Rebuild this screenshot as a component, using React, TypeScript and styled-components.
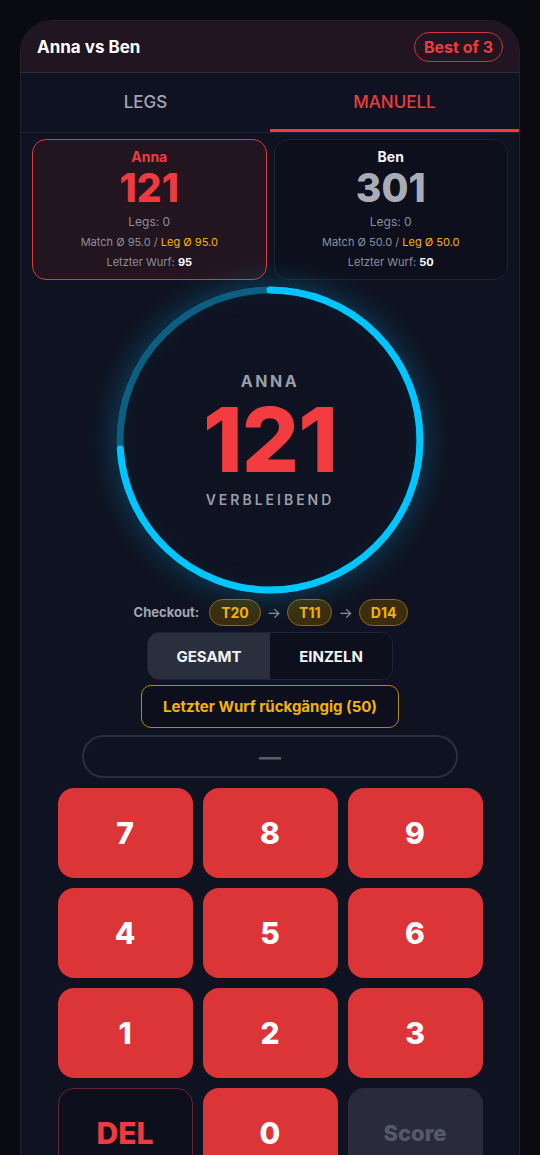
import React, { useState } from 'react';
import styled, { createGlobalStyle } from 'styled-components';

const GlobalStyle = createGlobalStyle`
  html, body {
    margin: 0;
    padding: 0;
    background: #0a0b10;
    font-family: Inter, "Noto Sans", sans-serif;
  }
  * { box-sizing: border-box; }
`;

const Page = styled.div`
  padding-top: 20px;
  min-height: 1155px;
`;

const Phone = styled.div`
  width: 500px;
  margin: 0 auto;
  background: #0f1220;
  border: 1px solid #1d2130;
  border-bottom: none;
  border-radius: 32px 32px 0 0;
  overflow: hidden;
  height: 1135px;
`;

const Header = styled.div`
  height: 52px;
  display: flex;
  align-items: center;
  justify-content: space-between;
  padding: 0 16px;
  background: #201520;
  border-bottom: 1px solid #2a2b38;
`;

const Title = styled.div`
  color: #fff;
  font-weight: 700;
  font-size: 17px;
`;

const Badge = styled.div`
  color: #ef3b40;
  border: 1.5px solid #c8353b;
  border-radius: 999px;
  padding: 4px 9px;
  font-weight: 700;
  font-size: 16px;
`;

const Tabs = styled.div`
  display: flex;
  height: 60px;
  border-bottom: 1px solid #1f2230;
`;

const Tab = styled.div<{ $active?: boolean }>`
  flex: 1;
  display: flex;
  align-items: center;
  justify-content: center;
  font-size: 17px;
  font-weight: 500;
  color: ${(p) => (p.$active ? '#ef3b40' : '#a3a7b3')};
  border-bottom: 3px solid ${(p) => (p.$active ? '#ef3b40' : 'transparent')};
  padding-top: 2px;
`;

const Cards = styled.div`
  display: grid;
  grid-template-columns: 1fr 1fr;
  gap: 7px;
  padding: 6px 11px 0 11px;
`;

const Card = styled.div<{ $active?: boolean }>`
  height: 141px;
  border-radius: 14px;
  border: 1px solid ${(p) => (p.$active ? '#e0363c' : '#1e2232')};
  background: ${(p) => (p.$active ? '#22151f' : '#0d101c')};
  display: flex;
  flex-direction: column;
  align-items: center;
  padding-top: 8px;
`;

const CardName = styled.div<{ $active?: boolean }>`
  font-size: 14px;
  font-weight: 700;
  color: ${(p) => (p.$active ? '#ef3b40' : '#f2f3f6')};
`;

const CardScore = styled.div<{ $active?: boolean }>`
  font-size: 39px;
  font-weight: 800;
  line-height: 44px;
  color: ${(p) => (p.$active ? '#ef3b40' : '#a9acb7')};
  margin-top: 1px;
`;

const CardLine = styled.div`
  font-size: 12px;
  color: #8b8f9c;
  margin-top: 4px;
`;

const CardSmall = styled.div`
  font-size: 11px;
  color: #8b8f9c;
  margin-top: 6px;
`;

const Amber = styled.span`
  color: #f5b400;
`;

const Strong = styled.span`
  color: #fff;
  font-weight: 700;
`;

const RingWrap = styled.div`
  display: flex;
  justify-content: center;
  margin-top: 6px;
`;

const Ring = styled.div`
  position: relative;
  width: 308px;
  height: 308px;
  border-radius: 50%;
  box-shadow: 0 0 32px rgba(0, 190, 255, 0.32), inset 0 0 30px rgba(0, 190, 255, 0.12);
`;

const RingSvg = styled.svg`
  position: absolute;
  inset: 0;
`;

const RingCenter = styled.div`
  position: absolute;
  inset: 0;
  display: flex;
  flex-direction: column;
  align-items: center;
  justify-content: center;
`;

const RingName = styled.div`
  color: #9a9eab;
  font-size: 16px;
  font-weight: 700;
  letter-spacing: 2.5px;
  line-height: 20px;
`;

const RingScore = styled.div`
  color: #f23c40;
  font-size: 90px;
  font-weight: 800;
  line-height: 90px;
  letter-spacing: -1px;
  margin: 4px 0 6px;
`;

const RingSub = styled.div`
  color: #9a9eab;
  font-size: 14px;
  font-weight: 600;
  letter-spacing: 3px;
  line-height: 18px;
`;

const Checkout = styled.div`
  display: flex;
  align-items: center;
  justify-content: center;
  gap: 6px;
  margin-top: 4px;
  height: 28px;
  padding-left: 2px;
`;

const CheckoutLabel = styled.span`
  color: #a3a7b3;
  font-size: 13px;
  font-weight: 700;
  margin-right: 4px;
`;

const Chip = styled.span`
  color: #f5b400;
  background: #3a2e0e;
  border: 1px solid #8a6a14;
  border-radius: 999px;
  font-size: 14px;
  font-weight: 700;
  padding: 4px 11px;
`;

const Arrow = styled.span`
  color: #8a8e9a;
  font-size: 15px;
`;

const Toggle = styled.div`
  width: 246px;
  height: 48px;
  margin: 6px auto 0;
  display: grid;
  grid-template-columns: 1fr 1fr;
  border: 1px solid #20243a;
  border-radius: 12px;
  overflow: hidden;
`;

const ToggleItem = styled.div<{ $active?: boolean }>`
  display: flex;
  align-items: center;
  justify-content: center;
  font-size: 15px;
  font-weight: 700;
  color: #f2f3f6;
  background: ${(p) => (p.$active ? '#2a2f3e' : '#0d101c')};
`;

const Undo = styled.button`
  display: block;
  width: 258px;
  height: 43px;
  margin: 5px auto 0;
  background: #0d101c;
  border: 1px solid #b8880e;
  border-radius: 10px;
  color: #f5b400;
  font-family: inherit;
  font-size: 15px;
  font-weight: 700;
`;

const Display = styled.div`
  width: 376px;
  height: 43px;
  margin: 7px auto 0;
  border: 2px solid #2a2e3c;
  border-radius: 22px;
  display: flex;
  align-items: center;
  justify-content: center;
  color: #5a5e6b;
  font-size: 22px;
  font-weight: 700;
`;

const Keypad = styled.div`
  display: grid;
  grid-template-columns: repeat(3, 135px);
  grid-auto-rows: 90px;
  column-gap: 10px;
  row-gap: 10px;
  justify-content: center;
  margin-top: 10px;
`;

const Key = styled.button<{ $variant?: 'num' | 'del' | 'score' }>`
  border-radius: 16px;
  font-family: inherit;
  font-weight: 800;
  font-size: ${(p) => (p.$variant === 'score' ? '22px' : '30px')};
  padding: 0;
  color: ${(p) =>
    p.$variant === 'del' ? '#ef3b40' : p.$variant === 'score' ? '#555a69' : '#fff'};
  background: ${(p) =>
    p.$variant === 'del' ? '#0d101c' : p.$variant === 'score' ? '#2a2b3a' : '#dc3538'};
  border: 1px solid ${(p) => (p.$variant === 'del' ? '#6a2330' : 'transparent')};
`;

const R = 150;
const C = 2 * Math.PI * R;

const App: React.FC = () => {
  const [mode, setMode] = useState<'gesamt' | 'einzeln'>('gesamt');
  const progress = 0.74;

  return (
    <Page>
      <GlobalStyle />
      <Phone>
        <Header>
          <Title>Anna vs Ben</Title>
          <Badge>Best of 3</Badge>
        </Header>
        <Tabs>
          <Tab>LEGS</Tab>
          <Tab $active>MANUELL</Tab>
        </Tabs>
        <Cards>
          <Card $active>
            <CardName $active>Anna</CardName>
            <CardScore $active>121</CardScore>
            <CardLine>Legs: 0</CardLine>
            <CardSmall>
              Match Ø 95.0 / <Amber>Leg Ø 95.0</Amber>
            </CardSmall>
            <CardSmall>
              Letzter Wurf: <Strong>95</Strong>
            </CardSmall>
          </Card>
          <Card>
            <CardName>Ben</CardName>
            <CardScore>301</CardScore>
            <CardLine>Legs: 0</CardLine>
            <CardSmall>
              Match Ø 50.0 / <Amber>Leg Ø 50.0</Amber>
            </CardSmall>
            <CardSmall>
              Letzter Wurf: <Strong>50</Strong>
            </CardSmall>
          </Card>
        </Cards>
        <RingWrap>
          <Ring>
            <RingSvg width="308" height="308" viewBox="0 0 308 308">
              <circle cx="154" cy="154" r={R} fill="none" stroke="#0c5f80" strokeWidth="7" />
              <circle
                cx="154"
                cy="154"
                r={R}
                fill="none"
                stroke="#00c6ff"
                strokeWidth="7"
                strokeLinecap="round"
                strokeDasharray={`${C * progress} ${C}`}
                transform="rotate(-90 154 154)"
              />
            </RingSvg>
            <RingCenter>
              <RingName>ANNA</RingName>
              <RingScore>121</RingScore>
              <RingSub>VERBLEIBEND</RingSub>
            </RingCenter>
          </Ring>
        </RingWrap>
        <Checkout>
          <CheckoutLabel>Checkout:</CheckoutLabel>
          <Chip>T20</Chip>
          <Arrow>→</Arrow>
          <Chip>T11</Chip>
          <Arrow>→</Arrow>
          <Chip>D14</Chip>
        </Checkout>
        <Toggle>
          <ToggleItem $active={mode === 'gesamt'} onClick={() => setMode('gesamt')}>
            GESAMT
          </ToggleItem>
          <ToggleItem $active={mode === 'einzeln'} onClick={() => setMode('einzeln')}>
            EINZELN
          </ToggleItem>
        </Toggle>
        <Undo>Letzter Wurf rückgängig (50)</Undo>
        <Display>—</Display>
        <Keypad>
          {['7', '8', '9', '4', '5', '6', '1', '2', '3'].map((k) => (
            <Key key={k} $variant="num">
              {k}
            </Key>
          ))}
          <Key $variant="del">DEL</Key>
          <Key $variant="num">0</Key>
          <Key $variant="score">Score</Key>
        </Keypad>
      </Phone>
    </Page>
  );
};

export default App;
